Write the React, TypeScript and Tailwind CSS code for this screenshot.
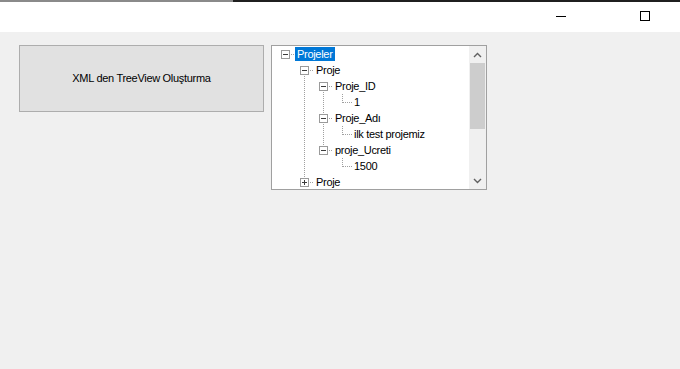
import React from 'react'

type Row = {
  label: string
  level: number
  guides: boolean[]
  kind: 'minus' | 'plus' | 'leaf'
  up: boolean
  down: boolean
  selected?: boolean
}

const rows: Row[] = [
  { label: 'Projeler', level: 0, guides: [], kind: 'minus', up: false, down: false, selected: true },
  { label: 'Proje', level: 1, guides: [false], kind: 'minus', up: false, down: true },
  { label: 'Proje_ID', level: 2, guides: [false, true], kind: 'minus', up: false, down: true },
  { label: '1', level: 3, guides: [false, true, true], kind: 'leaf', up: true, down: false },
  { label: 'Proje_Adı', level: 2, guides: [false, true], kind: 'minus', up: true, down: true },
  { label: 'ilk test projemiz', level: 3, guides: [false, true, true], kind: 'leaf', up: true, down: false },
  { label: 'proje_Ucreti', level: 2, guides: [false, true], kind: 'minus', up: true, down: false },
  { label: '1500', level: 3, guides: [false, true, false], kind: 'leaf', up: true, down: false },
  { label: 'Proje', level: 1, guides: [false], kind: 'plus', up: true, down: false },
]

const dot = '#a0a0a0'

const GuideCell: React.FC<{ on: boolean }> = ({ on }) => (
  <svg width="19" height="16" className="shrink-0">
    {on && <line x1="9.5" y1="0" x2="9.5" y2="16" stroke={dot} strokeDasharray="1 1" />}
  </svg>
)

const NodeCell: React.FC<{ row: Row }> = ({ row }) => {
  if (row.kind === 'leaf') {
    return (
      <svg width="19" height="16" className="shrink-0">
        <line x1="9.5" y1="0" x2="9.5" y2="9" stroke={dot} strokeDasharray="1 1" />
        <line x1="10" y1="8.5" x2="19" y2="8.5" stroke={dot} strokeDasharray="1 1" />
      </svg>
    )
  }
  return (
    <svg width="19" height="16" className="shrink-0">
      {row.up && <line x1="9.5" y1="0" x2="9.5" y2="4" stroke={dot} strokeDasharray="1 1" />}
      {row.down && <line x1="9.5" y1="14" x2="9.5" y2="16" stroke={dot} strokeDasharray="1 1" />}
      <line x1="15" y1="8.5" x2="19" y2="8.5" stroke={dot} strokeDasharray="1 1" />
      <rect x="5.5" y="4.5" width="8" height="8" fill="#ffffff" stroke="#9a9a9a" />
      <line x1="7" y1="8.5" x2="12" y2="8.5" stroke="#3c3c3c" />
      {row.kind === 'plus' && <line x1="9.5" y1="6" x2="9.5" y2="11" stroke="#3c3c3c" />}
    </svg>
  )
}

const TreeRow: React.FC<{ row: Row }> = ({ row }) => (
  <div className="flex h-[16px] items-center">
    {row.guides.map((g, i) => (
      <GuideCell key={i} on={g} />
    ))}
    <NodeCell row={row} />
    <span
      className={`whitespace-nowrap px-[2px] leading-[14px] ${
        row.selected ? 'bg-[#0078d7] text-white' : 'text-black'
      }`}
    >
      {row.label}
    </span>
  </div>
)

export default function App() {
  return (
    <div
      className="flex h-[369px] w-[680px] flex-col overflow-hidden bg-[#f0f0f0] text-[11px] tracking-[-0.3px]"
      style={{ fontFamily: '"Liberation Sans", Arial, sans-serif' }}
    >
      {/* title bar */}
      <div className="flex h-[32px] shrink-0 flex-col bg-white">
        <div className="flex h-[2px]">
          <div className="w-[233px] bg-[#8a8a8a]" />
          <div className="flex-1 bg-[#1f1f1f]" />
        </div>
        <div className="flex flex-1 items-start justify-end">
          <div className="mr-[74px] mt-[14px] h-px w-[10px] bg-black" />
          <div className="mr-[30px] mt-[9px] h-[10px] w-[10px] border border-black" />
        </div>
      </div>

      {/* form body */}
      <div className="flex items-start gap-[7px] pl-[19px] pt-[13px]">
        <button className="flex h-[67px] w-[245px] items-center justify-center border border-[#adadad] bg-[#e1e1e1] text-black">
          XML den TreeView Oluşturma
        </button>

        <div className="flex h-[145px] w-[216px] overflow-hidden border border-[#a0a0a0] bg-white">
          <div className="flex-1 overflow-hidden pl-[4px]">
            {rows.map((r, i) => (
              <TreeRow key={i} row={r} />
            ))}
          </div>
          <div className="flex w-[17px] flex-col bg-[#f0f0f0]">
            <div className="flex h-[17px] items-center justify-center">
              <svg width="9" height="6" viewBox="0 0 9 6">
                <path d="M1 5 L4.5 1.5 L8 5" fill="none" stroke="#606060" strokeWidth="1.4" />
              </svg>
            </div>
            <div className="mx-[1px] h-[66px] bg-[#cdcdcd]" />
            <div className="flex-1" />
            <div className="flex h-[17px] items-center justify-center">
              <svg width="9" height="6" viewBox="0 0 9 6">
                <path d="M1 1 L4.5 4.5 L8 1" fill="none" stroke="#606060" strokeWidth="1.4" />
              </svg>
            </div>
          </div>
        </div>
      </div>
    </div>
  )
}
